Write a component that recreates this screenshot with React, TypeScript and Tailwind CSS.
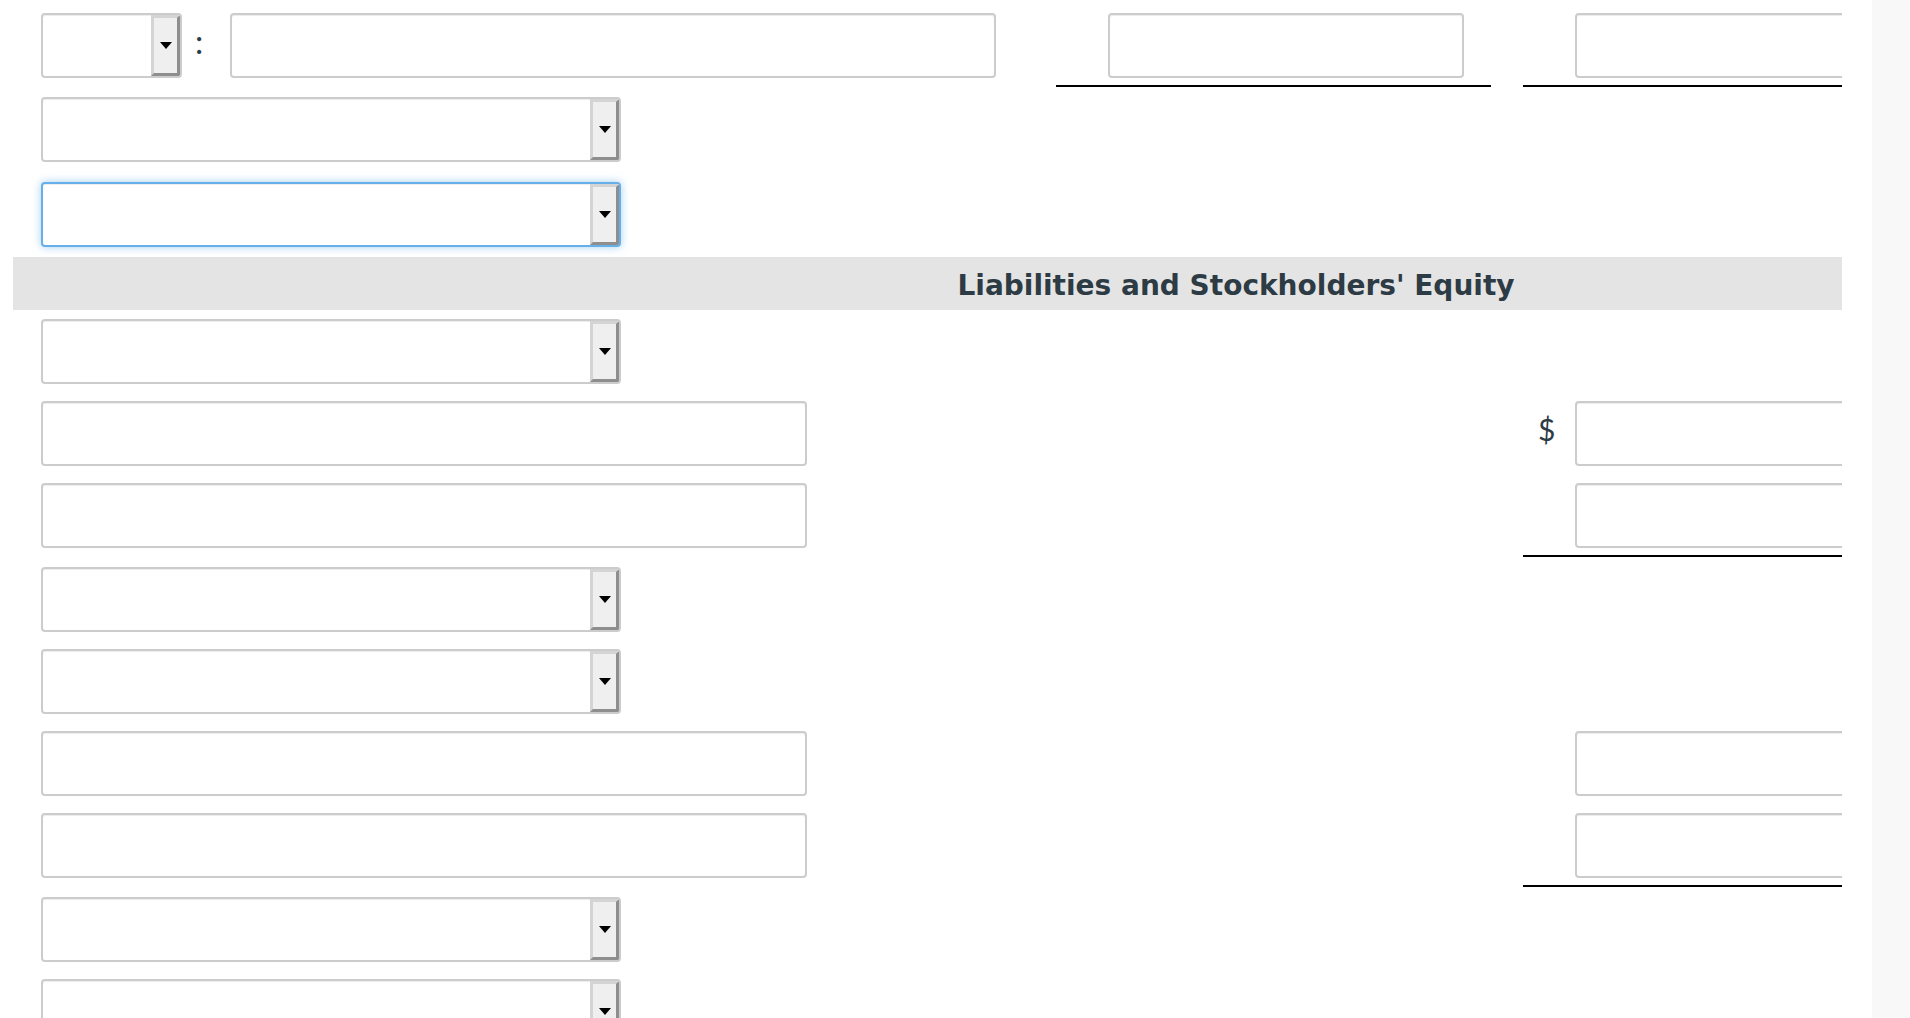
import clsx from "clsx";

type RowKind =
  | { type: "select"; focused?: boolean }
  | { type: "text"; dollar?: boolean; amount?: boolean; underline?: boolean };

const inputBase =
  "h-[65px] rounded-[4px] border-2 bg-white shadow-[inset_0_1px_1px_rgba(0,0,0,0.075)] outline-none";

function Select({ wide = true, focused = false }: { wide?: boolean; focused?: boolean }) {
  return (
    <div
      className={clsx(
        "flex h-[65px] shrink-0 overflow-hidden rounded-[4px] border-2 bg-white",
        wide ? "w-[580px]" : "w-[141px]",
        focused
          ? "border-[#66afe9] shadow-[inset_0_1px_1px_rgba(0,0,0,0.075),0_0_8px_rgba(102,175,233,0.6)]"
          : "border-[#cccccc] shadow-[inset_0_1px_1px_rgba(0,0,0,0.075)]"
      )}
    >
      <div className="flex-1" />
      <div className="flex h-full w-[29px] items-center justify-center border-[3px] border-t-[#d4d4d4] border-l-[#d4d4d4] border-r-[#8e8e8e] border-b-[#8e8e8e] bg-[#efefef]">
        <div className="h-0 w-0 border-x-[6px] border-t-[7px] border-x-transparent border-t-black" />
      </div>
    </div>
  );
}

function TextInput({ width }: { width: string }) {
  return <input type="text" readOnly className={clsx(inputBase, "shrink-0 border-[#cccccc]", width)} />;
}

function Amount({ dollar, underline }: { dollar?: boolean; underline?: boolean }) {
  return (
    <div
      className={clsx(
        "flex w-[435px] shrink-0 items-start",
        underline && "border-b-2 border-black pb-[7px]"
      )}
    >
      <div className="h-[55px] w-[52px] shrink-0 pl-[15px] font-['Lato',sans-serif] text-[30px] leading-[57px] text-[#2d3b45]">
        {dollar ? "$" : ""}
      </div>
      <TextInput width="w-[356px]" />
    </div>
  );
}

const rows: RowKind[] = [
  { type: "select" },
  { type: "text", dollar: true, amount: true },
  { type: "text", amount: true, underline: true },
  { type: "select" },
  { type: "select" },
  { type: "text", amount: true },
  { type: "text", amount: true, underline: true },
  { type: "select" },
  { type: "select" },
];

export default function App() {
  return (
    <div className="flex h-[1018px] w-[1910px] overflow-hidden bg-white font-['Lato',sans-serif]">
      <div className="w-[1872px] shrink-0 pl-[13px] pt-[4px]">
        <div className="w-[1829px] overflow-hidden">
          {/* header row */}
          <div className="flex items-start pb-[1px] pl-[28px] pt-[9px]">
            <div className="flex w-[1015px] shrink-0 items-start">
              <Select wide={false} />
              <span className="ml-[13px] mr-[27px] text-[33px] leading-[57px] text-[#2d3b45]">:</span>
              <TextInput width="w-[766px]" />
            </div>
            <Amount underline />
            <div className="ml-[32px]">
              <Amount underline />
            </div>
          </div>
          <div className="flex items-start pb-[11px] pl-[28px] pt-[9px]">
            <Select />
          </div>
          <div className="flex items-start pb-[8px] pl-[28px] pt-[9px]">
            <Select focused />
          </div>

          <div className="mt-[2px] flex h-[53px] items-center justify-center bg-[#e4e4e4] pl-[617px] pt-[4px]">
            <h3 className="font-['DejaVu_Sans',Verdana,sans-serif] text-[28px] font-bold text-[#2d3b45]">
              Liabilities and Stockholders' Equity
            </h3>
          </div>

          {rows.map((row, i) => (
            <div
              key={i}
              className={clsx(
                "flex items-start pl-[28px] pt-[9px]",
                row.type === "text" && row.underline ? "pb-[1px]" : "pb-[8px]"
              )}
            >
              <div className="w-[1015px] shrink-0">
                {row.type === "select" ? <Select focused={row.focused} /> : <TextInput width="w-[766px]" />}
              </div>
              {row.type === "text" && row.amount && (
                <>
                  <div className="w-[435px] shrink-0" />
                  <div className="ml-[32px]">
                    <Amount dollar={row.dollar} underline={row.underline} />
                  </div>
                </>
              )}
            </div>
          ))}
        </div>
      </div>
      <div className="h-full w-[38px] shrink-0 bg-[#f8f8f8]" />
    </div>
  );
}
